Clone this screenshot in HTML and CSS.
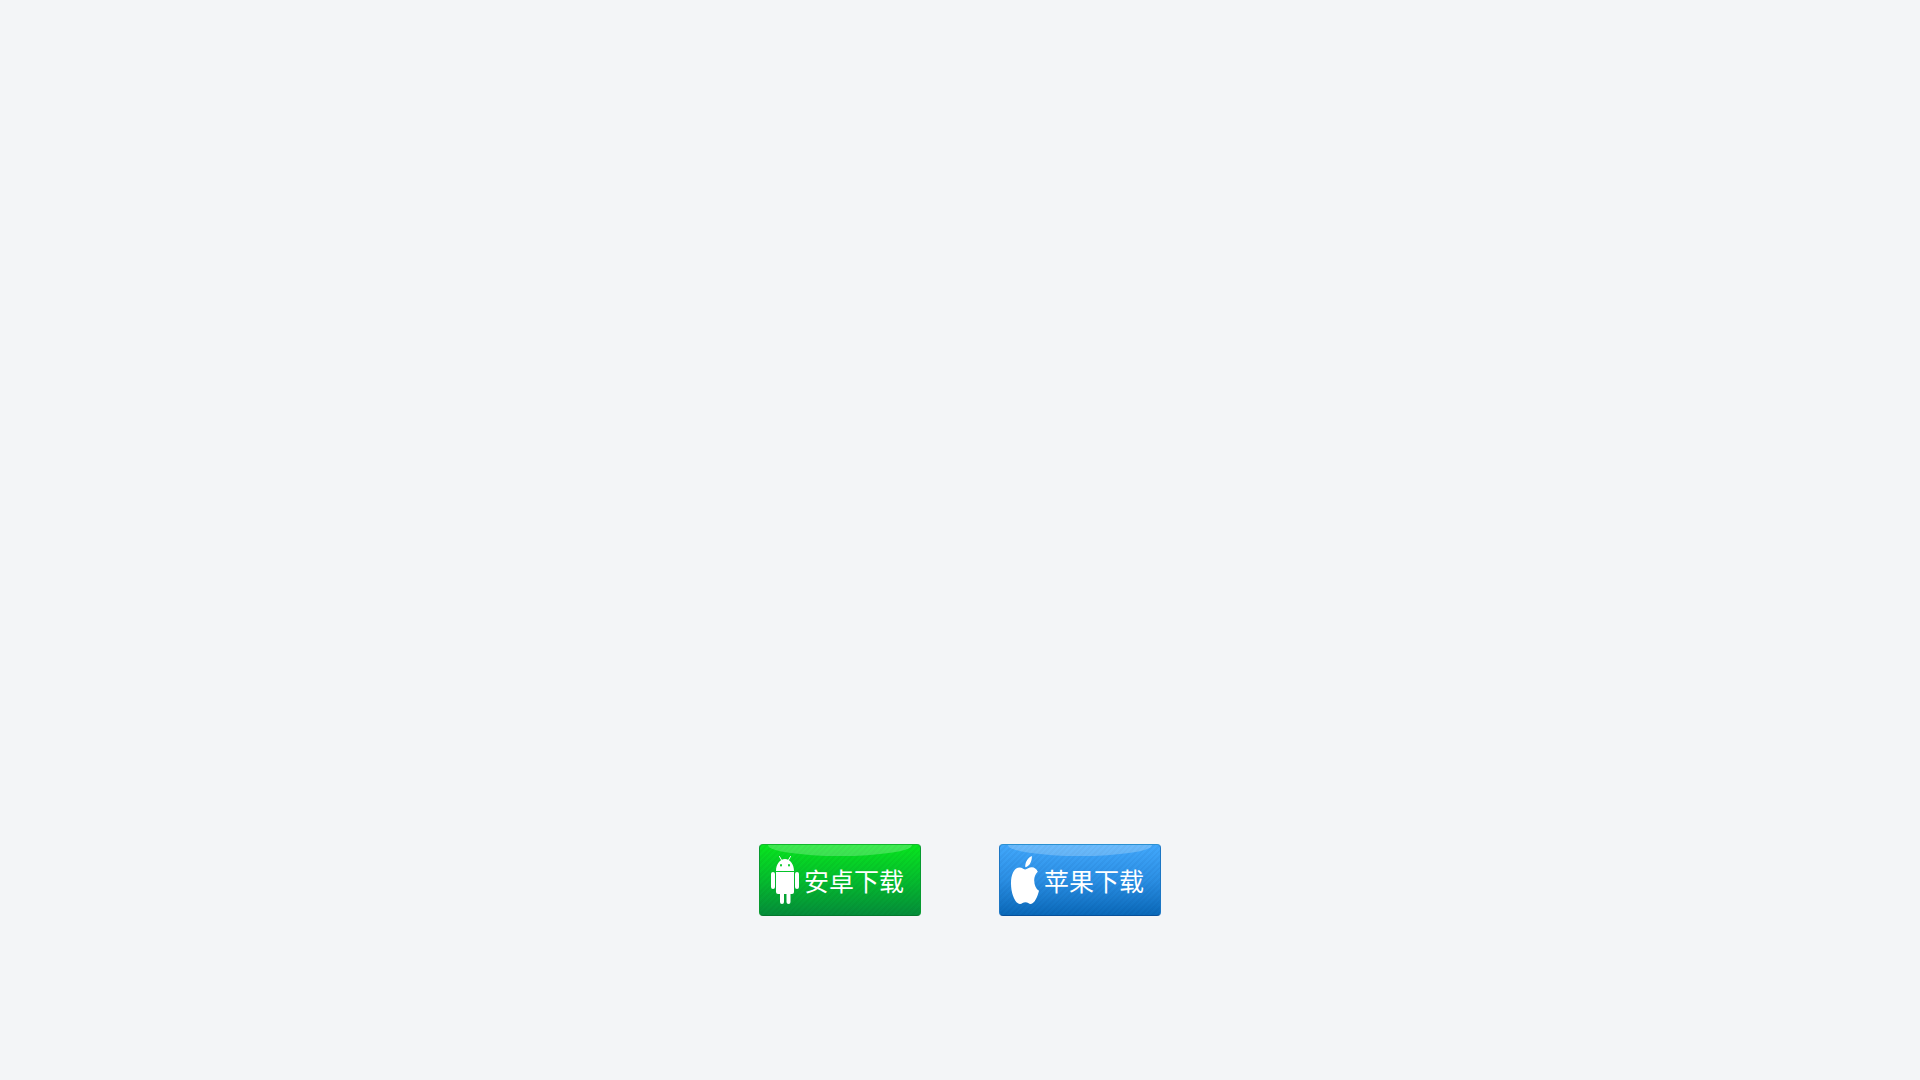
FILE: index.html
```html
<!DOCTYPE html>
<html lang="zh-CN">
<head>
    <meta charset="UTF-8">
    <meta name="viewport" content="width=device-width, initial-scale=1.0">
    <title>下载</title>
    <link rel="stylesheet" href="styles.css">
</head>
<body>
    <main class="page">
        <div class="downloads">
            <a class="btn btn-android" href="#android">
                <svg class="btn-icon" viewBox="0 0 28 48" fill="#fff" aria-hidden="true">
                    <path d="M8.5 .5l2.3 4M19.5 .5l-2.3 4" stroke="#fff" stroke-width="1" stroke-linecap="round"/>
                    <path fill-rule="evenodd" d="M5 15C5 8 9 3 14 3s9 5 9 12zM10 7.9a1 1.3 0 1 0 0 2.6 1 1.3 0 1 0 0-2.6zM18 7.9a1 1.3 0 1 0 0 2.6 1 1.3 0 1 0 0-2.6z"/>
                    <path d="M5 16h18v20q0 2-2 2H7q-2 0-2-2z"/>
                    <rect x="0" y="16" width="4" height="17" rx="2"/>
                    <rect x="24" y="16" width="4" height="17" rx="2"/>
                    <rect x="9" y="32" width="4" height="16" rx="2"/>
                    <rect x="15.5" y="32" width="4" height="16" rx="2"/>
                </svg>
                <span>安卓下载</span>
            </a>
            <a class="btn btn-apple" href="#apple">
                <svg class="btn-icon" viewBox="0 0 28 48" fill="#fff" aria-hidden="true">
                    <path d="M20.8 0C21.2 5 18.5 10.5 14.3 11.2C13.8 6.5 16.8 1.5 20.8 0z"/>
                    <path d="M14.3 13.5C16 13.5 18 11.3 20.8 11.3C23.4 11.3 25.5 13 26.8 15.7C24.500 17.800 23.200 20.500 23.200 24.200C23.200 29.300 25.200 33 28 34.800C26.800 40 23.500 48 19.800 48C17.700 48 16.800 46.300 14.500 46.300C12 46.300 11 48 9 48C4.200 48 0 37.500 0 27.500C0 17 4 11.500 8.500 11.500C11 11.500 13 13.500 14.300 13.500z"/>
                </svg>
                <span>苹果下载</span>
            </a>
        </div>
    </main>
</body>
</html>
```

FILE: styles.css
```css
* {
    box-sizing: border-box;
    margin: 0;
    padding: 0;
}

body {
    background-color: #f3f5f7;
    font-family: "Noto Sans CJK SC", sans-serif;
}

.page {
    min-height: 100vh;
    display: flex;
    flex-direction: column;
    justify-content: flex-end;
    padding-bottom: 164px;
}

.downloads {
    display: flex;
    justify-content: center;
    flex-wrap: wrap;
    gap: 78px;
}

.btn {
    position: relative;
    display: flex;
    align-items: center;
    gap: 5px;
    padding: 11px 16px 11px 11px;
    border: 1px solid;
    border-radius: 4px;
    overflow: hidden;
    color: #fff;
    font-size: 25px;
    line-height: 36px;
    white-space: nowrap;
    text-decoration: none;
}

/* glossy highlight along the top edge */
.btn::before {
    content: "";
    position: absolute;
    top: 0;
    left: 8px;
    right: 8px;
    height: 11px;
    border-radius: 0 0 50% 50% / 0 0 100% 100%;
    background: rgba(255, 255, 255, 0.22);
}

.btn-icon {
    width: 28px;
    height: 48px;
    flex-shrink: 0;
}

.btn-android {
    border-color: #11b82c #079a30 #04782c;
    background: repeating-linear-gradient(135deg, rgba(0, 70, 0, 0.05) 0 2px, transparent 2px 4px),
        linear-gradient(#08e61f, #05bd2e 50%, #048d3b);
}

.btn-apple {
    border-color: #2b91d2 #1b76c4 #07509a;
    background: repeating-linear-gradient(135deg, rgba(0, 40, 100, 0.05) 0 2px, transparent 2px 4px),
        linear-gradient(#42a8fc, #2b8fe4 50%, #0a69b9);
}
```
